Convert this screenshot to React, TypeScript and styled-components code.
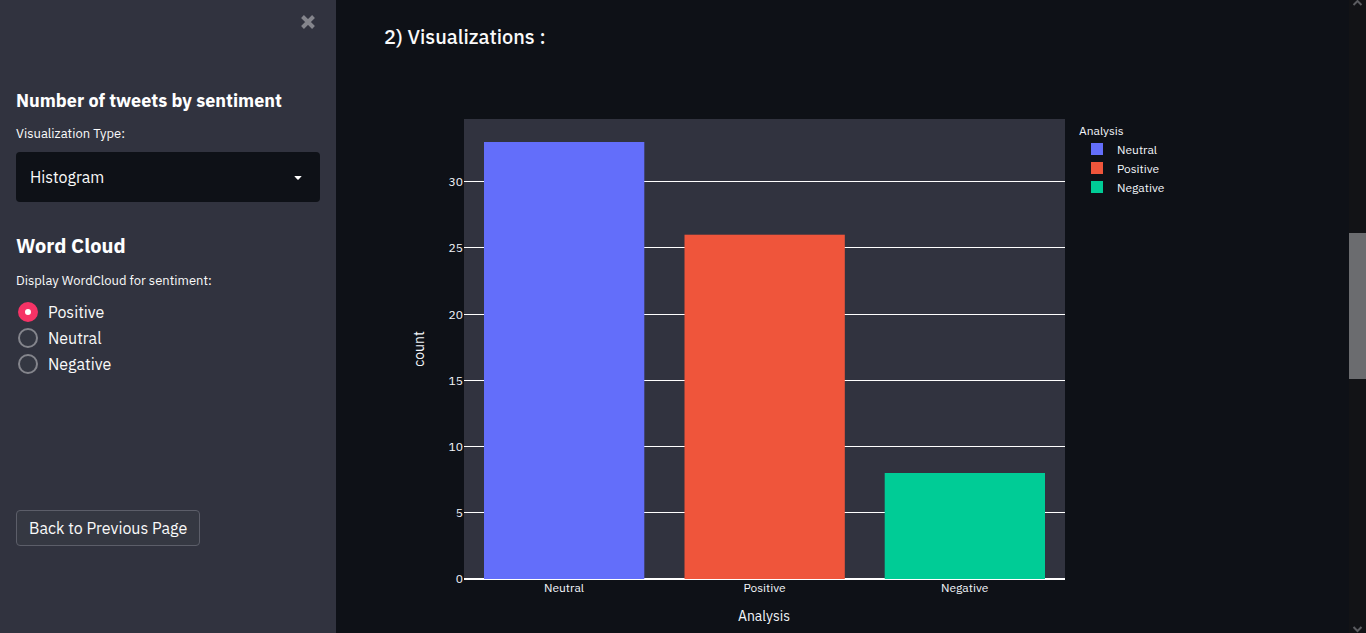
import React, { useState } from 'react';
import styled, { createGlobalStyle } from 'styled-components';

const GlobalStyle = createGlobalStyle`
  *, *::before, *::after { box-sizing: border-box; }
  body {
    margin: 0;
    background: #0e1117;
    color: #fafafa;
    font-family: "IBM Plex Sans", Roboto, "Liberation Sans", sans-serif;
    font-size: 16px;
    line-height: 26px;
  }
  h1, h2, h3 { margin: 0; }
  button, select, input { font: inherit; color: inherit; }
`;

const Page = styled.div`
  display: flex;
  height: 100vh;
  overflow: hidden;
`;

const Sidebar = styled.aside`
  flex: 0 0 336px;
  display: flex;
  flex-direction: column;
  padding: 12px 16px;
  background: #31333f;
`;

const CloseButton = styled.button`
  align-self: flex-end;
  display: grid;
  place-items: center;
  width: 24px;
  height: 20px;
  padding: 0;
  border: 0;
  background: none;
  color: #84858c;
  cursor: pointer;
`;

const SidebarSection = styled.section<{ $gap: number }>`
  display: flex;
  flex-direction: column;
  margin-top: ${({ $gap }) => $gap}px;
`;

const SidebarHeading = styled.h2<{ $size: number }>`
  font-size: ${({ $size }) => $size}px;
  line-height: 26px;
  font-weight: 700;
  color: #fff;
`;

const FieldLabel = styled.label`
  margin-top: 8px;
  font-size: 13px;
  line-height: 24px;
`;

const SelectBox = styled.div`
  position: relative;
  display: flex;
  margin-top: 6px;

  svg {
    position: absolute;
    right: 18px;
    top: 24px;
    pointer-events: none;
  }
`;

const Select = styled.select`
  appearance: none;
  width: 100%;
  height: 50px;
  padding: 0 14px;
  border: 0;
  border-radius: 4px;
  background: #0e1117;
`;

const RadioGroup = styled.fieldset`
  display: flex;
  flex-direction: column;
  margin: 10px 0 0;
  padding: 0;
  border: 0;
  min-width: 0;
`;

const Legend = styled.legend`
  margin-bottom: 6px;
  padding: 0;
  font-size: 13px;
  line-height: 24px;
`;

const RadioRow = styled.label`
  display: flex;
  align-items: center;
  gap: 10px;
  height: 26px;
  padding-left: 2px;
`;

const Radio = styled.input`
  appearance: none;
  width: 20px;
  height: 20px;
  margin: 0;
  border: 2px solid #84858c;
  border-radius: 50%;
  background: #343742;

  &:checked {
    border: 7px solid #f63366;
    background: #fff;
  }
`;

const BackButton = styled.button`
  align-self: flex-start;
  height: 36px;
  margin-top: 133px;
  padding: 0 12px;
  border: 1px solid #5c5e69;
  border-radius: 4px;
  background: #353842;
`;

const Main = styled.main`
  flex: 1;
  min-width: 0;
  padding: 24px 48px 0;
  overflow: hidden;
`;

const Title = styled.h1`
  font-size: 20px;
  line-height: 26px;
  font-weight: 500;
`;

const Chart = styled.svg`
  display: block;
  width: 100%;
  height: auto;
  margin-top: 10px;
  fill: #f2f5fa;
  font-size: 12px;
`;

const ScrollTrack = styled.div`
  flex: 0 0 17px;
  display: flex;
  flex-direction: column;
  background: #121316;

  svg { flex: none; }
`;

const ScrollSpace = styled.div<{ $weight: number }>`
  flex: ${({ $weight }) => $weight} 0 0;
`;

const ScrollThumb = styled.div`
  flex: 146 0 0;
  background: #6b6c6f;
`;

const SENTIMENTS = ['Positive', 'Neutral', 'Negative'];

const BARS = [
  { name: 'Neutral', color: '#636efa', x: 100, top: 82, height: 437 },
  { name: 'Positive', color: '#ef553b', x: 300.5, top: 174.7, height: 344.3 },
  { name: 'Negative', color: '#00cc96', x: 500.7, top: 413, height: 106 },
];

const TICKS = [
  { value: 30, y: 121 },
  { value: 25, y: 187 },
  { value: 20, y: 254 },
  { value: 15, y: 320 },
  { value: 10, y: 386 },
  { value: 5, y: 452 },
];

function Histogram() {
  return (
    <Chart viewBox="0 0 917 573" role="img" aria-label="Number of tweets by sentiment">
      <rect x="80" y="59" width="601" height="460" fill="#31333f" />
      {TICKS.map(({ value, y }) => (
        <g key={value}>
          <rect x="80" y={y} width="601" height="1" fill="#fff" />
          <text x="79" y={y + 5} textAnchor="end">{value}</text>
        </g>
      ))}
      <rect x="80" y="518" width="601" height="2" fill="#fff" />
      <text x="79" y="523" textAnchor="end">0</text>
      {BARS.map(({ name, color, x, top, height }, i) => (
        <g key={name}>
          <rect x={x} y={top} width="160.3" height={height} fill={color} />
          <text x={x + 80} y="532" textAnchor="middle">{name}</text>
          <rect x="707" y={83 + i * 19} width="12" height="12" fill={color} />
          <text x="733" y={94 + i * 19}>{name}</text>
        </g>
      ))}
      <text x="695" y="75">Analysis</text>
      <text x="380" y="561" textAnchor="middle" fontSize="14">Analysis</text>
      <text transform="translate(40 289) rotate(-90)" textAnchor="middle" fontSize="14">count</text>
    </Chart>
  );
}

export default function App() {
  const [sentiment, setSentiment] = useState('Positive');
  return (
    <Page>
      <GlobalStyle />
      <Sidebar>
        <CloseButton aria-label="Close sidebar">
          <svg width="14" height="14" viewBox="0 0 14 14" stroke="currentColor" strokeWidth="4">
            <path d="M1.5 1.5 12.5 12.5M12.5 1.5 1.5 12.5" />
          </svg>
        </CloseButton>
        <SidebarSection $gap={56}>
          <SidebarHeading $size={18}>Number of tweets by sentiment</SidebarHeading>
          <FieldLabel htmlFor="visualization">Visualization Type:</FieldLabel>
          <SelectBox>
            <Select id="visualization" defaultValue="Histogram">
              <option>Histogram</option>
              <option>Pie Chart</option>
            </Select>
            <svg width="8" height="4" viewBox="0 0 8 4" fill="#fff">
              <path d="M.8 0h6.4q.7 0 .2.5L4.6 3.4q-.6.6-1.2 0L.6.5Q.1 0 .8 0Z" />
            </svg>
          </SelectBox>
        </SidebarSection>
        <SidebarSection $gap={31}>
          <SidebarHeading $size={20}>Word Cloud</SidebarHeading>
          <RadioGroup>
            <Legend>Display WordCloud for sentiment:</Legend>
            {SENTIMENTS.map((name) => (
              <RadioRow key={name}>
                <Radio
                  type="radio"
                  name="sentiment"
                  checked={sentiment === name}
                  onChange={() => setSentiment(name)}
                />
                {name}
              </RadioRow>
            ))}
          </RadioGroup>
        </SidebarSection>
        <BackButton>Back to Previous Page</BackButton>
      </Sidebar>
      <Main>
        <Title>2) Visualizations :</Title>
        <Histogram />
      </Main>
      <ScrollTrack aria-hidden="true">
        <svg width="17" height="6" viewBox="0 0 17 6" fill="none" stroke="#5b5c60" strokeWidth="2">
          <path d="M4.5 5 8.5 1 12.5 5" />
        </svg>
        <ScrollSpace $weight={227} />
        <ScrollThumb />
        <ScrollSpace $weight={246} />
        <svg width="17" height="8" viewBox="0 0 17 8" fill="none" stroke="#5b5c60" strokeWidth="2">
          <path d="M4.5 2 8.5 6 12.5 2" />
        </svg>
      </ScrollTrack>
    </Page>
  );
}
